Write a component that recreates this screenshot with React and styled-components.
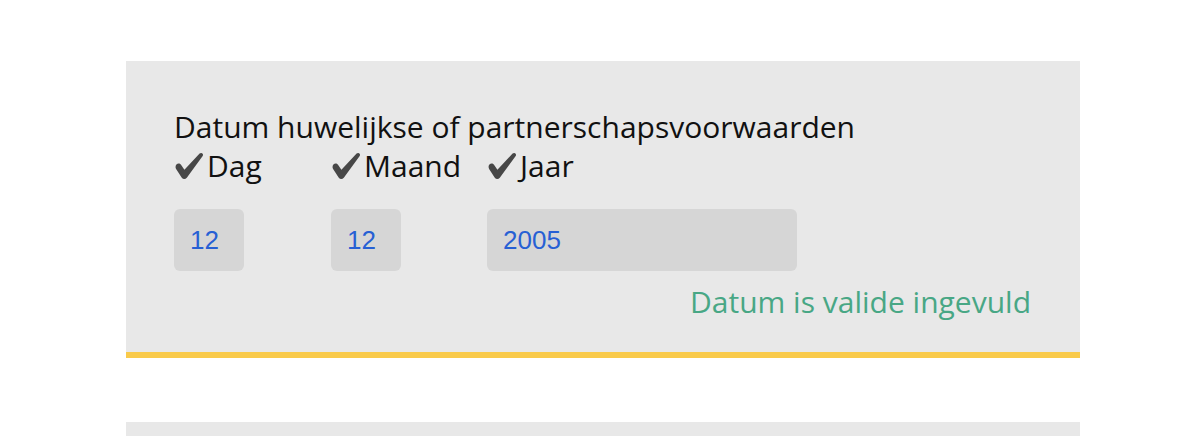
import React from 'react';
import styled, { createGlobalStyle } from 'styled-components';

const GlobalStyle = createGlobalStyle`
  body {
    margin: 0;
    background: #ffffff;
    font-family: "Open Sans", "Noto Sans", sans-serif;
  }
`;

const Page = styled.div`
  padding: 61px 0 0 126px;
  width: 954px;
`;

// Grey fieldset block with the yellow rule under it
const Panel = styled.section`
  background: #e8e8e8;
  border-bottom: 6px solid #f9ca4a;
  padding: 47px 49px 31px 48px;
`;

const NextPanel = styled.div`
  background: #e8e8e8;
  height: 14px;
  margin-top: 64px;
`;

const Legend = styled.div`
  font-size: 30px;
  line-height: 38px;
  color: #111;
`;

const DateGrid = styled.div`
  display: grid;
  grid-template-columns: 157px 156px 310px;
  row-gap: 24px;
  margin-top: 1px;
`;

const Label = styled.label`
  display: flex;
  align-items: center;
  font-size: 30px;
  line-height: 38px;
  color: #111;
`;

const Check = styled.svg`
  width: 30px;
  height: 28px;
  margin: 0 3px 0 0;
  flex-shrink: 0;
`;

const Field = styled.input`
  box-sizing: border-box;
  width: ${(p) => p.$width}px;
  height: 62px;
  border: none;
  border-radius: 6px;
  background: #d6d6d6;
  padding: 0 0 0 16px;
  font-family: "Liberation Sans", Arial, sans-serif;
  font-size: 26px;
  color: #2760d4;
  outline: none;
`;

const Status = styled.p`
  margin: 12px 0 0;
  text-align: right;
  font-size: 30px;
  line-height: 38px;
  color: #48a785;
`;

// heavy check, thick short left stroke, long tapering right stroke
const CheckMark = () => (
  <Check viewBox="0 0 30 28" aria-hidden="true">
    <path
      d="M2.4 12.4 C3.7 11 5.9 11.1 7 12.7 L10.4 17.8 L25.6 1.6 C26.6 0.6 28.2 0.8 28.8 2 C29.2 2.8 29 3.6 28.5 4.3 L12.8 25.8 C11.5 27.4 9 27.4 7.8 25.8 L2.1 16.9 C1.3 15.6 1.4 13.5 2.4 12.4 Z"
      fill="#474747"
    />
  </Check>
);

const parts = [
  { id: 'dag', label: 'Dag', value: '12', width: 70 },
  { id: 'maand', label: 'Maand', value: '12', width: 70 },
  { id: 'jaar', label: 'Jaar', value: '2005', width: 310 },
];

export default function App() {
  return (
    <>
      <GlobalStyle />
      <Page>
        <Panel>
          <Legend>Datum huwelijkse of partnerschapsvoorwaarden</Legend>
          <DateGrid>
            {parts.map((p) => (
              <Label key={p.id} htmlFor={p.id}>
                <CheckMark />
                {p.label}
              </Label>
            ))}
            {parts.map((p) => (
              <Field key={p.id} id={p.id} $width={p.width} defaultValue={p.value} />
            ))}
          </DateGrid>
          <Status>Datum is valide ingevuld</Status>
        </Panel>
        <NextPanel />
      </Page>
    </>
  );
}
